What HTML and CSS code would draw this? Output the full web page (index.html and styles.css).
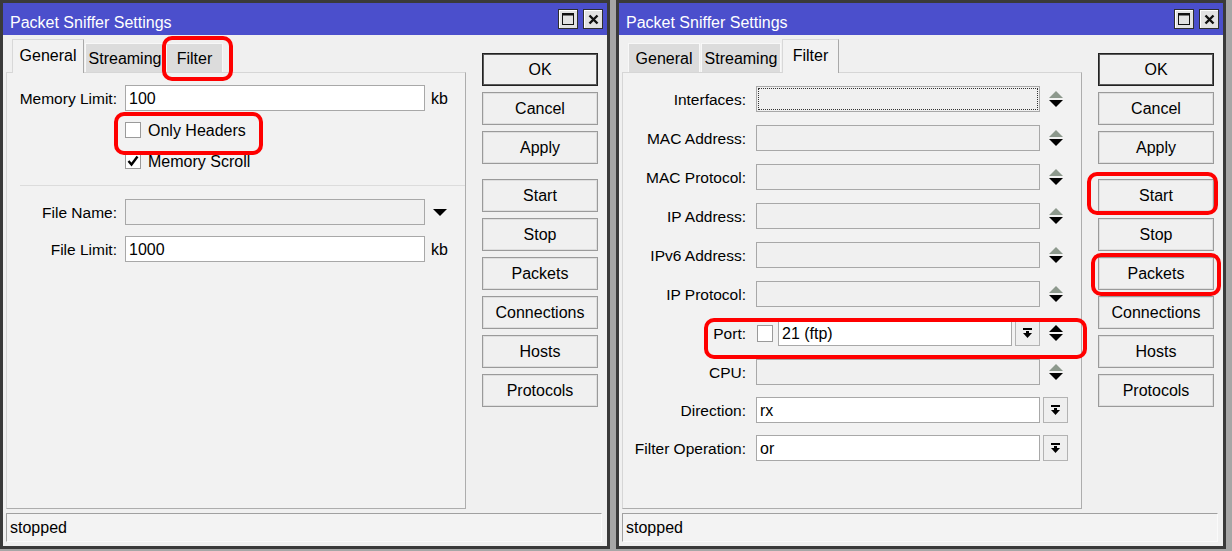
FILE: index.html
```html
<!DOCTYPE html>
<html lang="en">
<head>
  <meta charset="UTF-8" />
  <title>Packet Sniffer Settings</title>
  <link rel="stylesheet" href="styles.css">
</head>
<body>
  <div class="desktop">

    <!-- General tab window -->
    <div class="window">
      <div class="titlebar">
        <span class="title">Packet Sniffer Settings</span>
        <span class="title-btn">
          <svg width="12" height="12" viewBox="0 0 12 12"><rect x="0.5" y="0.5" width="11" height="11" fill="none" stroke="#111"/><rect x="0" y="0" width="12" height="2.5" fill="#111"/></svg>
        </span>
        <span class="title-btn">
          <svg width="11" height="11" viewBox="0 0 11 11"><path d="M1.5 1.5 L9.5 9.5 M9.5 1.5 L1.5 9.5" stroke="#111" stroke-width="2.4"/></svg>
        </span>
      </div>

      <div class="window-body">
        <div class="main">
          <div class="tabs">
            <div class="tab tab-general active">General</div>
            <div class="tab tab-streaming">Streaming</div>
            <div class="tab tab-filter">Filter</div>
          </div>
          <div class="panel general">
            <div class="row">
              <span class="label">Memory Limit:</span>
              <div class="field">100</div>
              <span class="unit">kb</span>
            </div>
            <div class="check-row only-headers">
              <span class="checkbox"></span>
              <span class="check-text">Only Headers</span>
            </div>
            <div class="check-row memory-scroll">
              <span class="checkbox">
                <svg width="14" height="14" viewBox="0 0 14 14"><path d="M2.5 7 L5.5 10.5 L11.5 2.5" stroke="#000" stroke-width="2.4" fill="none"/></svg>
              </span>
              <span class="check-text">Memory Scroll</span>
            </div>
            <div class="separator"></div>
            <div class="row file-name">
              <span class="label">File Name:</span>
              <div class="field disabled"></div>
              <svg class="combo-arrow" width="14" height="7" viewBox="0 0 14 7"><polygon points="0,0 14,0 7,7" fill="#000"/></svg>
            </div>
            <div class="row file-limit">
              <span class="label">File Limit:</span>
              <div class="field">1000</div>
              <span class="unit">kb</span>
            </div>
          </div>
        </div>

        <div class="buttons">
          <button class="btn default">OK</button>
          <button class="btn">Cancel</button>
          <button class="btn">Apply</button>
          <button class="btn group-start">Start</button>
          <button class="btn">Stop</button>
          <button class="btn">Packets</button>
          <button class="btn">Connections</button>
          <button class="btn">Hosts</button>
          <button class="btn">Protocols</button>
        </div>
      </div>

      <div class="statusbar">stopped</div>

      <div class="mark mark-filter-tab"></div>
      <div class="mark mark-only-headers"></div>
    </div>

    <!-- Filter tab window -->
    <div class="window">
      <div class="titlebar">
        <span class="title">Packet Sniffer Settings</span>
        <span class="title-btn">
          <svg width="12" height="12" viewBox="0 0 12 12"><rect x="0.5" y="0.5" width="11" height="11" fill="none" stroke="#111"/><rect x="0" y="0" width="12" height="2.5" fill="#111"/></svg>
        </span>
        <span class="title-btn">
          <svg width="11" height="11" viewBox="0 0 11 11"><path d="M1.5 1.5 L9.5 9.5 M9.5 1.5 L1.5 9.5" stroke="#111" stroke-width="2.4"/></svg>
        </span>
      </div>

      <div class="window-body">
        <div class="main">
          <div class="tabs">
            <div class="tab tab-general">General</div>
            <div class="tab tab-streaming">Streaming</div>
            <div class="tab tab-filter active">Filter</div>
          </div>
          <div class="panel filter">
            <div class="row">
              <span class="label">Interfaces:</span>
              <div class="field disabled focused"></div>
              <svg class="updown" width="14" height="17" viewBox="0 0 14 17"><polygon points="0,7 7,0 14,7" fill="#8d998d"/><polygon points="0,9 14,9 7,16" fill="#000"/></svg>
            </div>
            <div class="row">
              <span class="label">MAC Address:</span>
              <div class="field disabled"></div>
              <svg class="updown" width="14" height="17" viewBox="0 0 14 17"><polygon points="0,7 7,0 14,7" fill="#8d998d"/><polygon points="0,9 14,9 7,16" fill="#000"/></svg>
            </div>
            <div class="row">
              <span class="label">MAC Protocol:</span>
              <div class="field disabled"></div>
              <svg class="updown" width="14" height="17" viewBox="0 0 14 17"><polygon points="0,7 7,0 14,7" fill="#8d998d"/><polygon points="0,9 14,9 7,16" fill="#000"/></svg>
            </div>
            <div class="row">
              <span class="label">IP Address:</span>
              <div class="field disabled"></div>
              <svg class="updown" width="14" height="17" viewBox="0 0 14 17"><polygon points="0,7 7,0 14,7" fill="#8d998d"/><polygon points="0,9 14,9 7,16" fill="#000"/></svg>
            </div>
            <div class="row">
              <span class="label">IPv6 Address:</span>
              <div class="field disabled"></div>
              <svg class="updown" width="14" height="17" viewBox="0 0 14 17"><polygon points="0,7 7,0 14,7" fill="#8d998d"/><polygon points="0,9 14,9 7,16" fill="#000"/></svg>
            </div>
            <div class="row">
              <span class="label">IP Protocol:</span>
              <div class="field disabled"></div>
              <svg class="updown" width="14" height="17" viewBox="0 0 14 17"><polygon points="0,7 7,0 14,7" fill="#8d998d"/><polygon points="0,9 14,9 7,16" fill="#000"/></svg>
            </div>
            <div class="row">
              <span class="label">Port:</span>
              <span class="checkbox port-check"></span>
              <div class="field port">21 (ftp)</div>
              <span class="drop-btn">
                <svg width="9" height="10" viewBox="0 0 9 10"><rect x="0" y="0" width="9" height="2" fill="#000"/><rect x="3" y="3" width="3" height="2" fill="#000"/><polygon points="0,5 9,5 4.5,10" fill="#000"/></svg>
              </span>
              <svg class="updown" width="14" height="17" viewBox="0 0 14 17"><polygon points="0,7 7,0 14,7" fill="#000"/><polygon points="0,9 14,9 7,16" fill="#000"/></svg>
            </div>
            <div class="row">
              <span class="label">CPU:</span>
              <div class="field disabled"></div>
              <svg class="updown" width="14" height="17" viewBox="0 0 14 17"><polygon points="0,7 7,0 14,7" fill="#8d998d"/><polygon points="0,9 14,9 7,16" fill="#000"/></svg>
            </div>
            <div class="row direction">
              <span class="label">Direction:</span>
              <div class="field">rx</div>
              <span class="drop-btn">
                <svg width="9" height="10" viewBox="0 0 9 10"><rect x="0" y="0" width="9" height="2" fill="#000"/><rect x="3" y="3" width="3" height="2" fill="#000"/><polygon points="0,5 9,5 4.5,10" fill="#000"/></svg>
              </span>
            </div>
            <div class="row operation">
              <span class="label">Filter Operation:</span>
              <div class="field">or</div>
              <span class="drop-btn">
                <svg width="9" height="10" viewBox="0 0 9 10"><rect x="0" y="0" width="9" height="2" fill="#000"/><rect x="3" y="3" width="3" height="2" fill="#000"/><polygon points="0,5 9,5 4.5,10" fill="#000"/></svg>
              </span>
            </div>
          </div>
        </div>

        <div class="buttons">
          <button class="btn default">OK</button>
          <button class="btn">Cancel</button>
          <button class="btn">Apply</button>
          <button class="btn group-start">Start</button>
          <button class="btn">Stop</button>
          <button class="btn">Packets</button>
          <button class="btn">Connections</button>
          <button class="btn">Hosts</button>
          <button class="btn">Protocols</button>
        </div>
      </div>

      <div class="statusbar">stopped</div>

      <div class="mark mark-port"></div>
      <div class="mark mark-start"></div>
      <div class="mark mark-packets"></div>
    </div>

  </div>
</body>
</html>
```

FILE: styles.css
```css
body {
  margin: 0;
  background: #a6a6a6;
  font-family: "Liberation Sans", Arial, sans-serif;
  font-size: 16px;
  color: #000;
}
.desktop {
  display: flex;
  gap: 6px;
  height: 551px;
}
.window {
  width: 610px;
  height: 549px;
  box-sizing: border-box;
  border: 3px solid #3a3a3a;
  background: #f0f0f0;
  display: flex;
  flex-direction: column;
  position: relative;
}
.titlebar {
  height: 32px;
  flex: none;
  box-sizing: border-box;
  background: #4b4fcc;
  color: #fff;
  display: flex;
  align-items: center;
  padding: 0 4px 0 7px;
}
.title {
  flex: 1;
  padding-top: 7px;
}
.title-btn {
  width: 20px;
  height: 20px;
  box-sizing: border-box;
  border: 1px solid #2e2e2e;
  background: #e2e2e2;
  box-shadow: inset 1px 1px 0 #fff;
  margin-left: 5px;
  display: flex;
  align-items: center;
  justify-content: center;
}
.window-body {
  flex: 1;
  min-height: 0;
  display: flex;
  padding: 4px 9px 4px 3px;
}
.main {
  width: 460px;
  display: flex;
  flex-direction: column;
}
.tabs {
  height: 33px;
  flex: none;
  display: flex;
  align-items: flex-end;
  padding-left: 6px;
}
.tab {
  height: 29px;
  box-sizing: border-box;
  background: #dcdcdc;
  border: 1px solid #f8f8f8;
  border-bottom: none;
  display: flex;
  align-items: center;
  justify-content: center;
  margin-right: 1px;
  padding-top: 1px;
}
.tab.active {
  height: 34px;
  margin-bottom: -1px;
  padding: 0 0 2px;
  background: #f2f2f2;
  border-color: #d8d8d8 #a9a9a9 #f2f2f2 #d8d8d8;
  position: relative;
  z-index: 1;
}
.tab-general { width: 72px; }
.tab-streaming { width: 80px; }
.tab-filter { width: 57px; }
.panel {
  flex: 1;
  background: #f2f2f2;
  border: 1px solid #d6d6d6;
  border-right-color: #adadad;
  border-bottom-color: #adadad;
}
.row {
  display: flex;
  align-items: center;
  height: 26px;
}
.label {
  flex: none;
  box-sizing: border-box;
  text-align: right;
  white-space: nowrap;
  font-size: 15.5px;
  padding-top: 2px;
}
.field {
  flex: none;
  box-sizing: border-box;
  height: 26px;
  border: 1px solid #a8a8a8;
  background: #fff;
  padding: 2px 3px 0;
  display: flex;
  align-items: center;
}
.field.disabled {
  background: #f0f0f0;
}
.field.focused {
  outline: 1px dotted #333;
  outline-offset: -3px;
}
.unit {
  margin-left: 6px;
  padding-top: 2px;
}
.checkbox {
  flex: none;
  width: 16px;
  height: 16px;
  box-sizing: border-box;
  border: 1px solid #9a9a9a;
  background: #fff;
  display: flex;
  align-items: center;
  justify-content: center;
}

/* general tab */
.general {
  padding-top: 12px;
}
.general .label {
  width: 110px;
  margin-right: 8px;
}
.general .field {
  width: 300px;
}
.check-row {
  display: flex;
  align-items: center;
  height: 20px;
  padding-left: 118px;
}
.check-text {
  margin-left: 7px;
  padding-top: 2px;
}
.only-headers { margin-top: 9px; }
.memory-scroll { margin-top: 11px; }
.separator {
  height: 1px;
  background: #dcdcdc;
  margin: 14px 0 0 13px;
}
.file-name { margin-top: 13px; }
.file-limit { margin-top: 11px; }
.combo-arrow {
  margin-left: 8px;
}

/* filter tab */
.filter {
  padding-top: 13px;
}
.filter .label {
  width: 123px;
  margin-right: 10px;
}
.filter .field {
  width: 284px;
}
.filter .row + .row {
  margin-top: 13px;
}
.filter .row.direction { margin-top: 12px; }
.filter .row.operation { margin-top: 12px; }
.filter .field.port {
  width: 234px;
  margin-left: 5px;
}
.port-check {
  height: 17px;
  margin-left: 1px;
}
.drop-btn {
  flex: none;
  width: 25px;
  height: 26px;
  box-sizing: border-box;
  margin-left: 3px;
  border: 1px solid #b3b3b3;
  background: #efefef;
  display: flex;
  align-items: center;
  justify-content: center;
}
.updown {
  margin-left: 9px;
}

/* button column */
.buttons {
  width: 116px;
  margin-left: 16px;
  padding-top: 14px;
  display: flex;
  flex-direction: column;
  gap: 6px;
}
.btn {
  height: 33px;
  box-sizing: border-box;
  border: 1px solid #9a9a9a;
  background: #f0f0f0;
  box-shadow: inset 0 0 0 1px #dedede;
  font-family: inherit;
  font-size: 16px;
  color: #000;
  padding: 1px 0 0;
}
.btn.default {
  border-color: #222;
  box-shadow: inset 0 0 0 1px #5a5a5a;
}
.btn.group-start {
  margin-top: 9px;
}

.statusbar {
  flex: none;
  height: 29px;
  box-sizing: border-box;
  margin: 0 5px 4px 3px;
  border: 1px solid;
  border-color: #a0a0a0 #fafafa #fafafa #a0a0a0;
  background: #f3f3f3;
  padding: 1px 0 0 3px;
  display: flex;
  align-items: center;
}

/* red highlight marks */
.mark {
  position: absolute;
  box-sizing: border-box;
  border: 4px solid #f00;
  border-radius: 10px;
  pointer-events: none;
  z-index: 2;
}
.mark-filter-tab { left: 159px; top: 33px; width: 71px; height: 45px; }
.mark-only-headers { left: 111px; top: 109px; width: 149px; height: 43px; }
.mark-port { left: 85px; top: 315px; width: 383px; height: 41px; }
.mark-start { left: 468px; top: 169px; width: 131px; height: 43px; }
.mark-packets { left: 472px; top: 250px; width: 130px; height: 43px; }
```
